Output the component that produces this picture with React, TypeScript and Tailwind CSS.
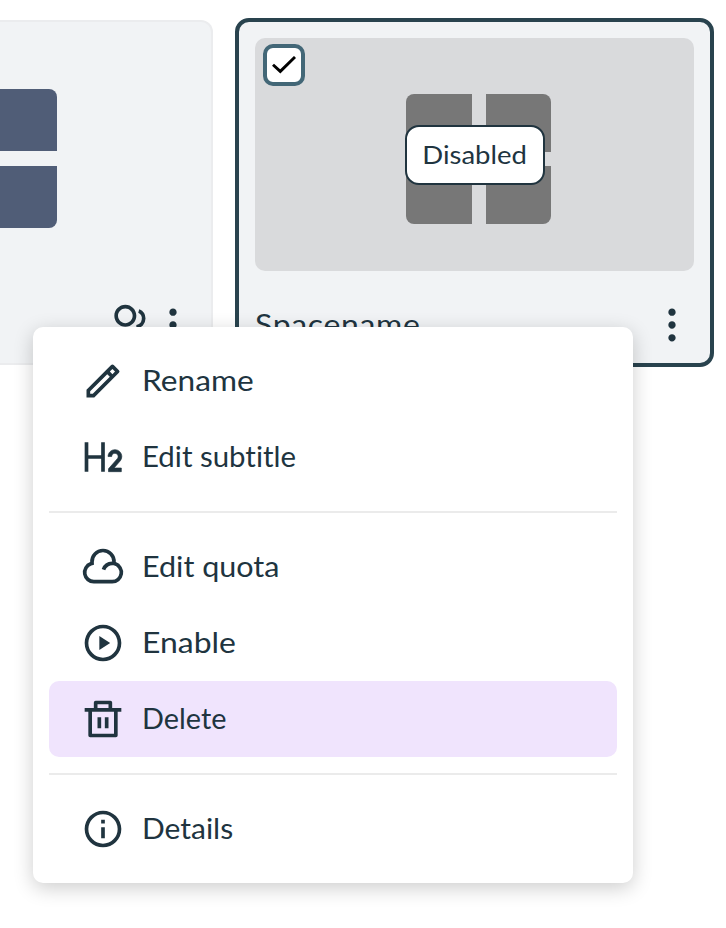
import type { ReactNode } from "react";

const paths = {
  rename:
    "M15.728 9.686l-1.414-1.414L5 17.586V19h1.414l9.314-9.314zm1.414-1.414l1.414-1.414-1.414-1.414-1.414 1.414 1.414 1.414zM7.242 21H3v-4.243L16.435 3.322a1 1 0 0 1 1.414 0l2.829 2.829a1 1 0 0 1 0 1.414L7.243 21z",
  cloud:
    "M17 21H7A6 6 0 0 1 5.008 9.339a7 7 0 1 1 13.984 0A6 6 0 0 1 17 21zm0-2a4 4 0 1 0-3.796-5.265l-1.898-.633A6.003 6.003 0 0 1 17 9a5 5 0 1 0-9.994.243l.07 1.488-1.404.494A4.002 4.002 0 0 0 7 19h10z",
  play: "M12 22C6.477 22 2 17.523 2 12S6.477 2 12 2s10 4.477 10 10-4.477 10-10 10zm0-2a8 8 0 1 0 0-16 8 8 0 0 0 0 16zM10 8.2l5.9 3.8-5.9 3.8z",
  trash:
    "M17 6h5v2h-2v13a1 1 0 0 1-1 1H5a1 1 0 0 1-1-1V8H2V6h5V3a1 1 0 0 1 1-1h8a1 1 0 0 1 1 1v3zm1 2H6v12h12V8zm-9 3h2v6H9v-6zm4 0h2v6h-2v-6zM9 4v2h6V4H9z",
  info: "M12 22C6.477 22 2 17.523 2 12S6.477 2 12 2s10 4.477 10 10-4.477 10-10 10zm0-2a8 8 0 1 0 0-16 8 8 0 0 0 0 16zM11 7h2v2h-2V7zm0 4h2v6h-2v-6z",
  group:
    "M2 22a8 8 0 1 1 16 0h-2a6 6 0 1 0-12 0H2zm8-9c-3.315 0-6-2.685-6-6s2.685-6 6-6 6 2.685 6 6-2.685 6-6 6zm0-2c2.21 0 4-1.79 4-4s-1.79-4-4-4-4 1.79-4 4 1.79 4 4 4zm8.284 3.703A8.002 8.002 0 0 1 23 22h-2a6.001 6.001 0 0 0-3.537-5.473l.82-1.824zm-.596-11.29A5.5 5.5 0 0 1 21 8.5a5.499 5.499 0 0 1-5 5.478v-2.013a3.5 3.5 0 0 0 1.041-6.609l.555-1.943z",
  more: "M12 3c-1.1 0-2 .9-2 2s.9 2 2 2 2-.9 2-2-.9-2-2-2zm0 14c-1.1 0-2 .9-2 2s.9 2 2 2 2-.9 2-2-.9-2-2-2zm0-7c-1.1 0-2 .9-2 2s.9 2 2 2 2-.9 2-2-.9-2-2-2z",
};

function Icon({ d }: { d: string }) {
  return (
    <svg viewBox="0 0 24 24" className="size-11 shrink-0 fill-current">
      <path d={d} />
    </svg>
  );
}

function HeadingIcon() {
  return (
    <svg viewBox="0 0 24 24" className="size-11 shrink-0 fill-current">
      <path d="M4 4v7h7V4h2v16h-2v-7H4v7H2V4h2z" />
      <path
        d="M18.5 8c2.071 0 3.75 1.679 3.75 3.75 0 .857-.288 1.648-.772 2.28l-.148.18L18.034 18H22v2h-7v-1.556l4.82-5.546c.268-.307.43-.709.43-1.148 0-.966-.784-1.75-1.75-1.75-.918 0-1.671.707-1.744 1.606l-.006.144h-2C14.75 9.679 16.429 8 18.5 8z"
        stroke="currentColor"
        strokeWidth="0.35"
      />
    </svg>
  );
}

function Item({
  icon,
  label,
  stretch,
  active,
}: {
  icon: ReactNode;
  label: string;
  stretch: string;
  active?: boolean;
}) {
  return (
    <li className={`flex h-[76px] items-center gap-[16.5px] rounded-[10px] px-8 ${active ? "bg-[#f0e4fd]" : ""}`}>
      {icon}
      <span className={`mb-0.5 origin-left text-[28px] leading-10 whitespace-nowrap ${stretch}`}>{label}</span>
    </li>
  );
}

function Divider() {
  return <li className="my-4 h-0.5 bg-[#ebebeb]" />;
}

export default function App() {
  return (
    <div className="relative h-[928px] w-[726px] overflow-hidden bg-white font-['Lato','Open_Sans',sans-serif] text-[#20343f] [font-variant-ligatures:none]">
      <div className="flex items-start gap-[22px] pt-[18px]">
        <section className="mt-0.5 flex h-[345px] w-[213px] flex-col justify-between rounded-tr-xl rounded-br-xl border-2 border-l-0 border-[#ebecee] bg-[#f1f3f5]">
          <div className="mt-[67px] flex w-[57px] flex-col gap-[15px]">
            <div className="h-[62px] rounded-tr-lg bg-[#505d77]" />
            <div className="h-[62px] rounded-br-lg bg-[#505d77]" />
          </div>
          <div className="mb-[16px] flex items-center justify-end pr-4">
            <Icon d={paths.group} />
            <Icon d={paths.more} />
          </div>
        </section>

        <section className="h-[349px] w-[479px] rounded-[14px] border-4 border-[#29434e] bg-[#f1f3f5] p-4">
          <div className="relative flex h-[233px] w-[439px] items-center justify-center rounded-[10px] bg-[#d9dadc]">
            <div className="mt-2 ml-[8px] grid h-[130px] w-[145px] grid-cols-2 gap-[14px]">
              <div className="rounded-tl-lg bg-[#777]" />
              <div className="rounded-tr-lg bg-[#777]" />
              <div className="rounded-bl-lg bg-[#777]" />
              <div className="rounded-br-lg bg-[#777]" />
            </div>
            <div className="absolute top-1.5 left-2 flex size-[42px] items-center justify-center rounded-[10px] border-4 border-[#436777] bg-white">
              <svg viewBox="0 0 24 18" className="h-[18px] w-6" fill="none" stroke="#000" strokeWidth="2.9">
                <path d="M1 8.7L8.3 15.4L23 1" />
              </svg>
            </div>
            <div className="absolute top-[87px] left-[150px] flex h-[60px] w-[140px] items-center justify-center rounded-[14px] border-2 border-[#20343f] bg-white text-[25px]">
              <span className="scale-x-[1.1]">Disabled</span>
            </div>
          </div>
          <div className="mt-8 flex items-center justify-between">
            <span className="mb-0.5 origin-left scale-x-[1.14] text-[28px] tracking-[0.6px]">Spacename</span>
            <Icon d={paths.more} />
          </div>
        </section>
      </div>

      <ul className="absolute top-[327px] left-[33px] w-[600px] rounded-[10px] bg-white p-4 shadow-[0_5px_20px_rgba(0,0,0,0.2)]">
        <Item icon={<Icon d={paths.rename} />} label="Rename" stretch="scale-x-[1.13]" />
        <Item icon={<HeadingIcon />} label="Edit subtitle" stretch="scale-x-[1.05]" />
        <Divider />
        <Item icon={<Icon d={paths.cloud} />} label="Edit quota" stretch="scale-x-[1.09]" />
        <Item icon={<Icon d={paths.play} />} label="Enable" stretch="scale-x-[1.14]" />
        <Item icon={<Icon d={paths.trash} />} label="Delete" stretch="scale-x-[1.03]" active />
        <Divider />
        <Item icon={<Icon d={paths.info} />} label="Details" stretch="scale-x-[1.07]" />
      </ul>
    </div>
  );
}
